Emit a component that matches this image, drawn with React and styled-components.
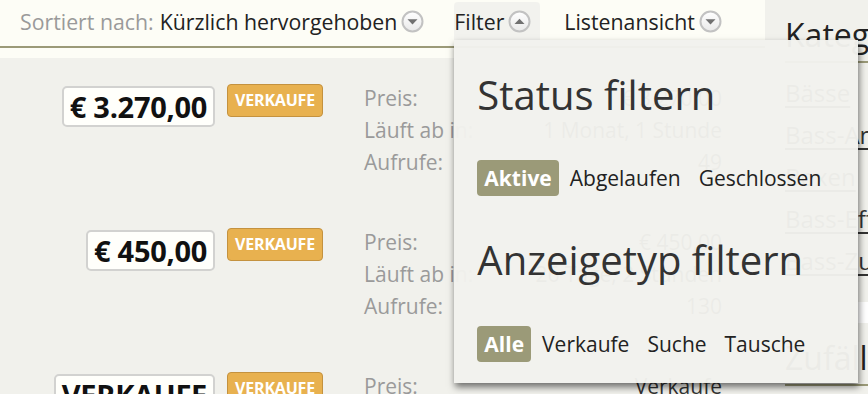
import React from 'react';
import styled, { createGlobalStyle } from 'styled-components';

const GlobalStyle = createGlobalStyle`
  body {
    margin: 0;
    background: #ffffff;
    font-family: "Open Sans", "DejaVu Sans", sans-serif;
    color: #222;
  }
`;

const Page = styled.div`
  display: flex;
  width: 868px;
  height: 394px;
  overflow: hidden;
`;

const Main = styled.div`
  flex: none;
  width: 765px;
  background: #f1f1ec;
`;

const ToolbarWrap = styled.div`
  background: #fdfdf6;
  padding-bottom: 10px;
`;

const Toolbar = styled.div`
  display: flex;
  height: 46px;
  padding-left: 20px;
  border-bottom: 2px solid #9b9a78;
  font-size: 21.3px;
`;

const ToolItem = styled.div`
  position: relative;
  display: flex;
  align-items: center;
  height: 38px;
  margin-top: 2px;
  margin-right: ${p => p.gap || 0}px;
  padding-right: ${p => (p.open ? 9 : 0)}px;
  border-radius: 4px 4px 0 0;
  background: ${p => (p.open ? 'rgba(242, 242, 237, 0.97)' : 'transparent')};
  z-index: ${p => (p.open ? 10 : 'auto')};
`;

const Muted = styled.span`
  color: #9a9a9a;
  margin-right: 6px;
`;

const Strong = styled.span`
  color: #222;
`;

const Arrow = styled.svg`
  margin-left: 4px;
  width: 23px;
  height: 23px;
`;

const ArrowIcon = ({ up }) => (
  <Arrow viewBox="0 0 23 23">
    <defs>
      <linearGradient id={up ? 'gu' : 'gd'} x1="0" y1="0" x2="0" y2="1">
        <stop offset="0" stopColor="#ffffff" />
        <stop offset="1" stopColor="#e9e9e9" />
      </linearGradient>
    </defs>
    <circle cx="11.5" cy="11.5" r="10" fill={`url(#${up ? 'gu' : 'gd'})`} stroke="#c2c2c2" strokeWidth="2" />
    {up ? (
      <polygon points="6.5,14 16.5,14 11.5,8.8" fill="#707070" />
    ) : (
      <polygon points="6.5,9.3 16.5,9.3 11.5,14.5" fill="#707070" />
    )}
  </Arrow>
);

const Dropdown = styled.div`
  position: absolute;
  left: 0;
  top: 100%;
  width: 358px;
  height: 312px;
  padding: 31px 23px 0 23px;
  background: rgba(242, 242, 237, 0.97);
  box-shadow: 1px 4px 7px rgba(0, 0, 0, 0.55);
  color: #333;
`;

const DropTitle = styled.h2`
  margin: ${p => p.top || 0}px 0 0 0;
  font-size: 40px;
  line-height: 48px;
  font-weight: 400;
  color: #333;
  white-space: nowrap;
`;

const Choices = styled.div`
  display: flex;
  gap: 4px;
  margin-top: ${p => p.top || 0}px;
`;

const Choice = styled.span`
  display: flex;
  align-items: center;
  height: 36px;
  padding: 0 7px;
  border-radius: 4px;
  font-size: 21px;
  font-weight: ${p => (p.active ? 700 : 400)};
  color: ${p => (p.active ? '#fff' : '#222')};
  background: ${p => (p.active ? '#9b9a78' : 'transparent')};
`;

const Listing = styled.div``;

const Row = styled.div`
  display: flex;
  align-items: flex-start;
  height: 144px;
  padding-top: 24px;
  box-sizing: border-box;
`;

const PriceCol = styled.div`
  display: flex;
  justify-content: flex-end;
  width: 215px;
`;

const PriceBox = styled.div`
  margin-top: 4px;
  height: 37px;
  padding: 0 6px;
  border: 2px solid #d2d2d0;
  border-radius: 5px;
  background: #fffffb;
  font-size: 29px;
  line-height: 37px;
  font-weight: 700;
  color: #111;
  letter-spacing: -0.3px;
  white-space: nowrap;
`;

const Badge = styled.div`
  margin: 2px 0 0 12px;
  width: 94px;
  height: 31px;
  border: 1px solid #c4923f;
  border-radius: 4px;
  background: #e8b14f;
  color: #fff;
  font-size: 16px;
  font-weight: 700;
  line-height: 31px;
  text-align: center;
  letter-spacing: -0.2px;
`;

const Details = styled.div`
  display: grid;
  grid-template-columns: auto 1fr;
  width: 358px;
  margin-left: 41px;
  font-size: 21px;
  line-height: 32px;
  white-space: nowrap;
`;

const Label = styled.span`
  color: #9a9a9a;
`;

const Value = styled.span`
  color: #333;
  text-align: right;
`;

const Sidebar = styled.div`
  flex: none;
  width: 300px;
  display: flex;
  flex-direction: column;
  gap: 21px;
`;

const SideBox = styled.div`
  background: #f1f1ec;
  padding-left: 20px;
  height: ${p => (p.h ? `${p.h}px` : 'auto')};
  flex: ${p => (p.h ? 'none' : 1)};
`;

const SideTitle = styled.h3`
  margin: 0;
  padding: 15px 0 6px 0;
  border-bottom: 2px solid #9b9a78;
  font-size: 32px;
  line-height: 40px;
  font-weight: 400;
  color: #222;
  white-space: nowrap;
`;

const SideList = styled.ul`
  list-style: none;
  margin: 0;
  padding: 9px 0 0 0;
`;

const SideLink = styled.li`
  font-size: 24px;
  line-height: 42px;
  color: #333;
  text-decoration: underline;
  text-underline-offset: 4px;
  white-space: nowrap;
`;

const rows = [
  { price: '€ 3.270,00', value: '€ 3.270,00', time: '1 Monat, 1 Stunde', views: '49' },
  { price: '€ 450,00', value: '€ 450,00', time: '26 Tage, 2 Stunden', views: '130' },
  { price: 'VERKAUFE', value: 'Verkaufe', time: '2 Monate, 3 Tage', views: '88' },
];

const categories = ['Bässe', 'Bass-Amps', 'Boxen', 'Bass-Effekte', 'Bass-Zubehör'];

export default function App() {
  return (
    <Page>
      <GlobalStyle />
      <Main>
        <ToolbarWrap>
          <Toolbar>
            <ToolItem gap={30}>
              <Muted>Sortiert nach:</Muted>
              <Strong>Kürzlich hervorgehoben</Strong>
              <ArrowIcon />
            </ToolItem>
            <ToolItem open gap={24}>
              <Strong>Filter</Strong>
              <ArrowIcon up />
              <Dropdown>
                <DropTitle>Status filtern</DropTitle>
                <Choices top={41}>
                  <Choice active>Aktive</Choice>
                  <Choice>Abgelaufen</Choice>
                  <Choice>Geschlossen</Choice>
                </Choices>
                <DropTitle top={40}>Anzeigetyp filtern</DropTitle>
                <Choices top={42}>
                  <Choice active>Alle</Choice>
                  <Choice>Verkaufe</Choice>
                  <Choice>Suche</Choice>
                  <Choice>Tausche</Choice>
                </Choices>
              </Dropdown>
            </ToolItem>
            <ToolItem>
              <Strong>Listenansicht</Strong>
              <ArrowIcon />
            </ToolItem>
          </Toolbar>
        </ToolbarWrap>
        <Listing>
          {rows.map(r => (
            <Row key={r.price}>
              <PriceCol>
                <PriceBox>{r.price}</PriceBox>
              </PriceCol>
              <Badge>VERKAUFE</Badge>
              <Details>
                <Label>Preis:</Label>
                <Value>{r.value}</Value>
                <Label>Läuft ab in:</Label>
                <Value>{r.time}</Value>
                <Label>Aufrufe:</Label>
                <Value>{r.views}</Value>
              </Details>
            </Row>
          ))}
        </Listing>
      </Main>
      <Sidebar>
        <SideBox h={302}>
          <SideTitle>Kategorien</SideTitle>
          <SideList>
            {categories.map(c => (
              <SideLink key={c}>{c}</SideLink>
            ))}
          </SideList>
        </SideBox>
        <SideBox>
          <SideTitle>Zufällige Anzeigen</SideTitle>
        </SideBox>
      </Sidebar>
    </Page>
  );
}
